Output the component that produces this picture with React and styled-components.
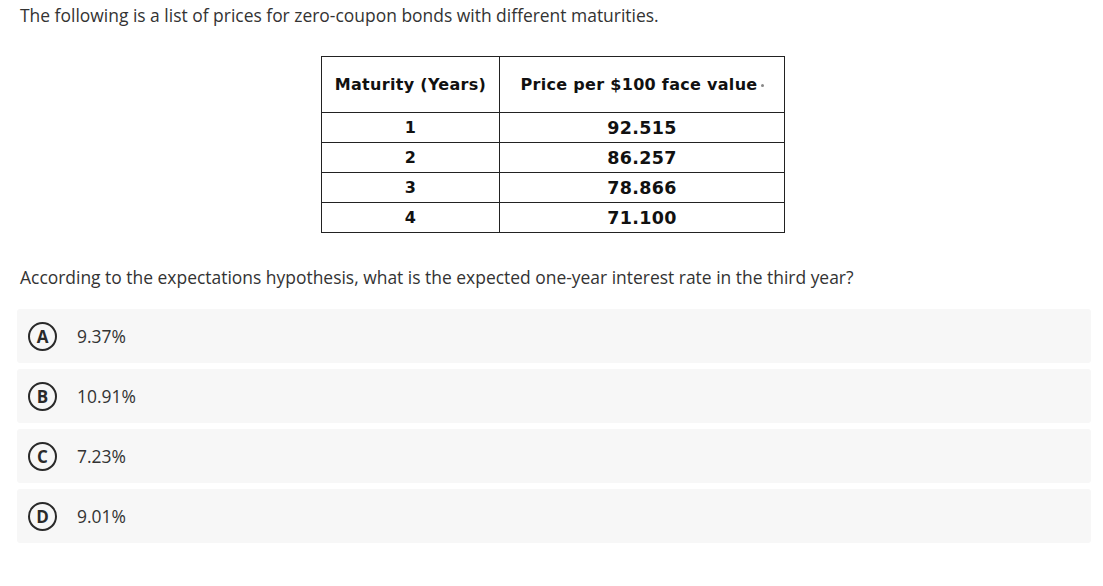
import React from "react";
import styled, { createGlobalStyle } from "styled-components";

const Global = createGlobalStyle`
  html, body { margin: 0; padding: 0; background: #fff; }
  body { font-family: "Open Sans", "Noto Sans", sans-serif; color: #333; }
`;

const Page = styled.div`
  padding: 3px 12px 0 17px;
  width: 1103px;
  box-sizing: border-box;
`;

const Para = styled.p`
  margin: 0;
  padding-left: 3px;
  font-size: 17.45px;
  line-height: 24px;
  color: #333;
`;

const TableWrap = styled.div`
  display: flex;
  justify-content: flex-start;
  padding-left: 304px;
  margin: 29px 0 32px;
`;

const Table = styled.table`
  border-collapse: collapse;
  border: 1px solid #222;
  font-family: "DejaVu Sans", "Liberation Sans", sans-serif;
  font-weight: bold;
  color: #111;
`;

const Th = styled.th`
  border: 1px solid #222;
  height: 55px;
  width: ${(p) => p.$w}px;
  padding: 0;
  font-size: 16px;
  letter-spacing: 0.3px;
  text-align: center;
  vertical-align: middle;
`;

const Td = styled.td`
  border: 1px solid #222;
  height: 29px;
  padding: 0;
  font-size: ${(p) => p.$fs}px;
  letter-spacing: 0.3px;
  text-align: center;
  vertical-align: middle;
`;

const Dot = styled.span`
  display: inline-block;
  width: 3px;
  height: 3px;
  border-radius: 50%;
  background: #888;
  margin-left: 3px;
  vertical-align: middle;
`;

const Options = styled.div`
  display: flex;
  flex-direction: column;
  gap: 6px;
  margin-top: 20px;
`;

const Option = styled.div`
  display: flex;
  align-items: center;
  height: 54px;
  background: #f7f7f7;
  border-radius: 3px;
  padding-left: 11px;
`;

const Letter = styled.span`
  box-sizing: border-box;
  width: 29px;
  height: 29px;
  border: 2px solid #2a2a2a;
  border-radius: 50%;
  display: flex;
  align-items: center;
  justify-content: center;
  font-size: 17px;
  font-weight: bold;
  line-height: 1;
  color: #2a2a2a;
  flex: none;
`;

const OptText = styled.span`
  margin-left: 20px;
  font-size: 17.45px;
  color: #333;
`;

const rows = [
  ["1", "92.515"],
  ["2", "86.257"],
  ["3", "78.866"],
  ["4", "71.100"],
];

const opts = [
  ["A", "9.37%"],
  ["B", "10.91%"],
  ["C", "7.23%"],
  ["D", "9.01%"],
];

export default function App() {
  return (
    <Page>
      <Global />
      <Para>The following is a list of prices for zero-coupon bonds with different maturities.</Para>
      <TableWrap>
        <Table>
          <thead>
            <tr>
              <Th $w={177}>Maturity (Years)</Th>
              <Th $w={284}>
                Price per $100 face value
                <Dot />
              </Th>
            </tr>
          </thead>
          <tbody>
            {rows.map(([m, p]) => (
              <tr key={m}>
                <Td $fs={16}>{m}</Td>
                <Td $fs={17.5}>{p}</Td>
              </tr>
            ))}
          </tbody>
        </Table>
      </TableWrap>
      <Para>According to the expectations hypothesis, what is the expected one-year interest rate in the third year?</Para>
      <Options>
        {opts.map(([l, t]) => (
          <Option key={l}>
            <Letter>{l}</Letter>
            <OptText>{t}</OptText>
          </Option>
        ))}
      </Options>
    </Page>
  );
}
